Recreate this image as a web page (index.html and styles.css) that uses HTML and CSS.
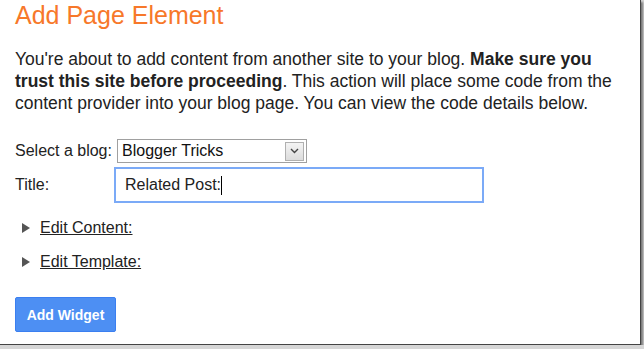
FILE: index.html
```html
<!DOCTYPE html>
<html lang="en">
<head>
  <meta charset="UTF-8" />
  <title>Add Page Element</title>
  <link rel="stylesheet" href="styles.css">
</head>
<body>
  <div class="frame">
    <h1>Add Page Element</h1>

    <p class="intro">
      You're about to add content from another site to your blog. <b>Make sure you</b> <b>trust this site before proceeding</b>. This action will place some code from the content provider into your blog page. You can view the code details below.
    </p>

    <div class="form-row blog-row">
      <label class="lbl-blog">Select a blog:</label>
      <div class="select">
        <span>Blogger Tricks</span>
        <span class="select-btn">
          <svg width="9" height="6" viewBox="0 0 9 6"><path d="M1 1 L4.5 4.5 L8 1" fill="none" stroke="#444" stroke-width="1.4"/></svg>
        </span>
      </div>
    </div>

    <div class="form-row title-row">
      <label class="lbl-title">Title:</label>
      <div class="text-input">Related Post:<span class="caret"></span></div>
    </div>

    <div class="expander first"><span class="tri"></span><a href="#">Edit Content:</a></div>
    <div class="expander"><span class="tri"></span><a href="#">Edit Template:</a></div>

    <button class="add-btn">Add Widget</button>
  </div>
</body>
</html>
```

FILE: styles.css
```css
body {
  margin: 0;
  background-color: #d6d6d6;
  font-family: "Liberation Sans", Arial, sans-serif;
  color: #222;
}
.frame {
  width: 625px;
  height: 344px;
  padding-left: 15px;
  box-sizing: content-box;
  background: #fff;
  border-right: 1px solid #444;
  border-bottom: 1px solid #444;
  box-shadow: 2px 2px 2px #777;
  overflow: hidden;
}
h1 {
  margin: 0;
  padding-top: 1px;
  font-size: 25px;
  font-weight: normal;
  color: #f7782a;
  line-height: 28px;
}
.intro {
  margin: 19px 0 0 0;
  font-size: 17.5px;
  line-height: 22px;
  width: 605px;
}
.form-row {
  display: flex;
  align-items: center;
  font-size: 16px;
}
.blog-row {
  margin-top: 25px;
}
.lbl-blog {
  width: 102px;
}
.select {
  width: 184px;
  height: 22px;
  border: 1px solid #a0a0a0;
  display: flex;
  align-items: center;
  justify-content: space-between;
  padding-left: 4px;
  box-sizing: content-box;
  color: #111;
}
.select-btn {
  width: 17px;
  height: 17px;
  margin-right: 2px;
  border: 1px solid #b0b0b0;
  background: linear-gradient(#f4f4f4, #dcdcdc);
  display: flex;
  align-items: center;
  justify-content: center;
}
.title-row {
  margin-top: 4px;
}
.lbl-title {
  width: 99px;
}
.text-input {
  width: 357px;
  height: 32px;
  border: 2px solid #7baaf7;
  padding-left: 9px;
  display: flex;
  align-items: center;
  color: #222;
}
.caret {
  display: inline-block;
  width: 1px;
  height: 19px;
  background: #000;
}
.expander {
  display: flex;
  align-items: center;
  font-size: 16px;
  margin-left: 7px;
  margin-top: 16px;
}
.tri {
  width: 0;
  height: 0;
  border-top: 5px solid transparent;
  border-bottom: 5px solid transparent;
  border-left: 8px solid #555;
  margin-right: 10px;
}
.expander a {
  color: #222;
  text-decoration: underline;
}
.add-btn {
  margin-top: 26px;
  width: 101px;
  height: 35px;
  border: 1px solid #3b7ff0;
  border-radius: 2px;
  background: #4d8ff3;
  color: #fff;
  font-family: "Liberation Sans", Arial, sans-serif;
  font-size: 14px;
  font-weight: bold;
}
```
